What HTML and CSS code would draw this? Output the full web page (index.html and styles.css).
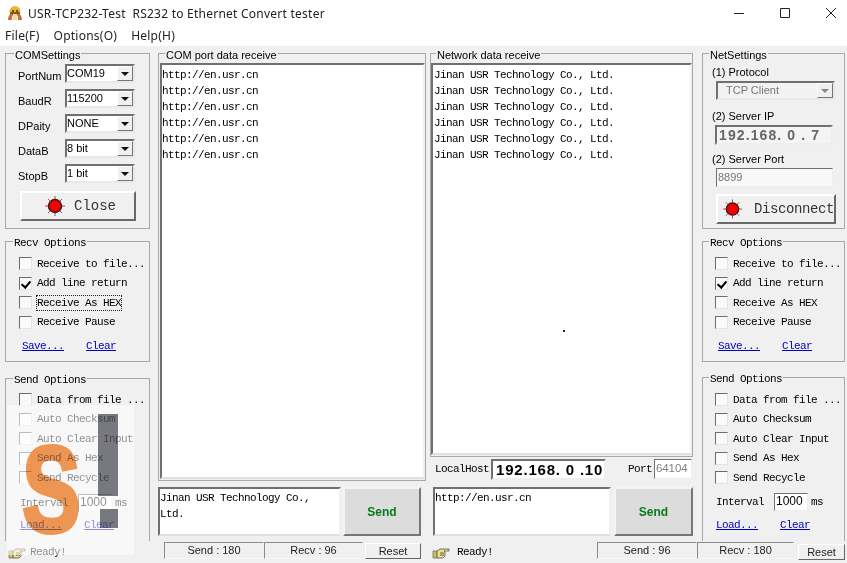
FILE: index.html
```html
<!DOCTYPE html>
<html lang="en">
<head>
<meta charset="utf-8">
<title>USR-TCP232-Test</title>
<link rel="stylesheet" href="styles.css">
</head>
<body>
<div class="window">
  <header class="titlebar">
    <svg class="appicon" width="16" height="16" viewBox="0 0 16 16"><circle cx="8" cy="6.5" r="5.5" fill="#f0b030"/><path d="M3 7h10v3H3z" fill="#8a5a20"/><path d="M1 15c0-4 2-6 4-6v6zM15 15c0-4-2-6-4-6v6z" fill="#c8703a"/><rect x="6" y="9" width="4" height="6" fill="#f6d9a0"/><circle cx="6" cy="6" r="1" fill="#3a2a10"/><circle cx="10" cy="6" r="1" fill="#3a2a10"/></svg>
    <span class="title">USR-TCP232-Test&nbsp; RS232 to Ethernet Convert tester</span>
    <div class="winctl">
      <svg width="12" height="12" viewBox="0 0 12 12"><path d="M1 6.5h10" stroke="#222" fill="none"/></svg>
      <svg width="12" height="12" viewBox="0 0 12 12"><path d="M1.5 1.5h9v9h-9z" stroke="#222" fill="none"/></svg>
      <svg width="12" height="12" viewBox="0 0 12 12"><path d="M1 1l10 10M11 1L1 11" stroke="#222" fill="none"/></svg>
    </div>
  </header>
  <nav class="menubar"><span>File(F)</span><span>Options(O)</span><span>Help(H)</span></nav>

  <main class="main">
    <section class="col">
      <fieldset class="group settings">
        <legend>COMSettings</legend>
        <div class="formrow"><label>PortNum</label><div class="combo"><span>COM19</span><i class="arrow"></i></div></div>
        <div class="formrow"><label>BaudR</label><div class="combo"><span>115200</span><i class="arrow"></i></div></div>
        <div class="formrow"><label>DPaity</label><div class="combo"><span>NONE</span><i class="arrow"></i></div></div>
        <div class="formrow"><label>DataB</label><div class="combo"><span>8 bit</span><i class="arrow"></i></div></div>
        <div class="formrow"><label>StopB</label><div class="combo"><span>1 bit</span><i class="arrow"></i></div></div>
        <button class="bigbtn closebtn"><svg class="led" width="22" height="22" viewBox="0 0 22 22"><use href="#ledicon"/></svg><span>Close</span></button>
      </fieldset>
      <fieldset class="group recv">
        <legend class="mono">Recv Options</legend>
        <div class="opts">
          <div class="opt"><i class="cb"></i>Receive to file...</div>
          <div class="opt"><i class="cb on"></i>Add line return</div>
          <div class="opt"><i class="cb"></i><span class="focus">Receive As HEX</span></div>
          <div class="opt"><i class="cb"></i>Receive Pause</div>
        </div>
        <div class="links"><a>Save...</a><a>Clear</a></div>
      </fieldset>
      <fieldset class="group send">
        <legend class="mono">Send Options</legend>
        <div class="opts">
          <div class="opt"><i class="cb"></i>Data from file ...</div>
          <div class="opt"><i class="cb"></i>Auto Checksum</div>
          <div class="opt"><i class="cb"></i>Auto Clear Input</div>
          <div class="opt"><i class="cb"></i>Send As Hex</div>
          <div class="opt"><i class="cb"></i>Send Recycle</div>
        </div>
        <div class="interval"><span>Interval</span><b class="field">1000</b><span>ms</span></div>
        <div class="links"><a>Load...</a><a>Clear</a></div>
      </fieldset>
    </section>

    <section class="col">
      <fieldset class="group pane compane">
        <legend>COM port data receive</legend>
        <div class="log">
          <div>http://en.usr.cn</div><div>http://en.usr.cn</div><div>http://en.usr.cn</div>
          <div>http://en.usr.cn</div><div>http://en.usr.cn</div><div>http://en.usr.cn</div>
        </div>
      </fieldset>
      <div class="sendrow comsend">
        <div class="sendbox">Jinan USR Technology Co., Ltd.</div>
        <button class="sendbtn">Send</button>
      </div>
    </section>

    <section class="col netcol">
      <fieldset class="group pane netpane">
        <legend>Network data receive</legend>
        <div class="log">
          <div>Jinan USR Technology Co., Ltd.</div><div>Jinan USR Technology Co., Ltd.</div><div>Jinan USR Technology Co., Ltd.</div>
          <div>Jinan USR Technology Co., Ltd.</div><div>Jinan USR Technology Co., Ltd.</div><div>Jinan USR Technology Co., Ltd.</div>
          <i class="speck"></i>
        </div>
      </fieldset>
      <div class="localrow">
        <span class="mono">LocalHost</span>
        <b class="field localip">192.168. 0 .10</b>
        <span class="mono portlabel">Port</span>
        <span class="field portval">64104</span>
      </div>
      <div class="sendrow netsend">
        <div class="sendbox">http://en.usr.cn</div>
        <button class="sendbtn">Send</button>
      </div>
    </section>

    <section class="col netside">
      <fieldset class="group settings net">
        <legend>NetSettings</legend>
        <div class="nlabel">(1) Protocol</div>
        <div class="combo wide disabled"><span>TCP Client</span><i class="arrow"></i></div>
        <div class="nlabel l2">(2) Server IP</div>
        <div class="field serverip">192.168. 0 . 7</div>
        <div class="nlabel l3">(2) Server Port</div>
        <div class="field serverport">8899</div>
        <button class="bigbtn discbtn"><svg class="led" width="22" height="22" viewBox="0 0 22 22"><use href="#ledicon"/></svg><span>Disconnect</span></button>
      </fieldset>
      <fieldset class="group recv">
        <legend class="mono">Recv Options</legend>
        <div class="opts">
          <div class="opt"><i class="cb"></i>Receive to file...</div>
          <div class="opt"><i class="cb on"></i>Add line return</div>
          <div class="opt"><i class="cb"></i>Receive As HEX</div>
          <div class="opt"><i class="cb"></i>Receive Pause</div>
        </div>
        <div class="links"><a>Save...</a><a>Clear</a></div>
      </fieldset>
      <fieldset class="group send sendnet">
        <legend class="mono">Send Options</legend>
        <div class="opts">
          <div class="opt"><i class="cb"></i>Data from file ...</div>
          <div class="opt"><i class="cb"></i>Auto Checksum</div>
          <div class="opt"><i class="cb"></i>Auto Clear Input</div>
          <div class="opt"><i class="cb"></i>Send As Hex</div>
          <div class="opt"><i class="cb"></i>Send Recycle</div>
        </div>
        <div class="interval"><span>Interval</span><b class="field">1000</b><span>ms</span></div>
        <div class="links"><a>Load...</a><a>Clear</a></div>
      </fieldset>
    </section>
  </main>

  <footer class="statusbar">
    <div class="ready r1"><svg width="18" height="13" viewBox="0 0 18 13"><use href="#handicon"/></svg><span>Ready!</span></div>
    <div class="stat s1">Send : 180</div>
    <div class="stat s2">Recv : 96</div>
    <button class="reset">Reset</button>
    <div class="ready r2"><svg width="18" height="13" viewBox="0 0 18 13"><use href="#handicon"/></svg><span>Ready!</span></div>
    <div class="stat s3">Send : 96</div>
    <div class="stat s4">Recv : 180</div>
    <button class="reset">Reset</button>
  </footer>
</div>

<div class="watermark">
  <span class="wm-s">S</span>
  <i class="wm-bar"></i>
  <i class="wm-dot"></i>
</div>

<svg class="defs" width="0" height="0">
  <defs>
    <g id="ledicon">
      <path d="M11 1v3M11 18v3M1 11h3M18 11h3M4 4l2 2M16 16l2 2M18 4l-2 2M6 16l-2 2" stroke="#e03030" stroke-width="1" fill="none"/>
      <circle cx="11" cy="11" r="6.5" fill="#f00000" stroke="#222" stroke-width="1.4"/>
      <circle cx="11" cy="11" r="4.6" fill="#f40000"/>
    </g>
    <g id="handicon">
      <path d="M1 5h4v7H1z" fill="#c8c070" stroke="#77744a" stroke-width=".8"/>
      <path d="M5 5l3-2h9v2h-5l1 1v4l-2 2H5z" fill="#e8dc90" stroke="#555" stroke-width=".8"/>
      <path d="M8 7h4M8 9h4" stroke="#444" stroke-width=".8"/>
    </g>
  </defs>
</svg>
</body>
</html>
```
FILE: styles.css
```css
* { box-sizing: border-box; }
html, body { margin: 0; padding: 0; }
body {
  width: 847px; height: 563px; overflow: hidden; position: relative;
  background: #f0f0f0; color: #000;
  font: 11px/14px "Liberation Sans", Arial, sans-serif;
}
.window { display: flex; flex-direction: column; height: 563px; }
.defs { position: absolute; }

/* Title and menu */
.titlebar {
  height: 26px; background: #fff; display: flex; align-items: center;
  padding-left: 7px; font: 12px "Noto Sans", sans-serif; color: #222;
}
.appicon { margin-right: 5px; }
.title { letter-spacing: .02em; flex: 1; }
.winctl { display: flex; gap: 34px; margin-right: 10px; }
.menubar {
  height: 20px; background: #fff; display: flex; gap: 14px; padding: 1px 0 0 5px;
  font: 12px/18px "Noto Sans", sans-serif; color: #222; letter-spacing: .02em;
}

/* Columns */
.main {
  flex: none; height: 495px; padding-left: 5px;
  display: grid; grid-template-columns: 145px 268px 263px 146px; column-gap: 6px;
}
.main .col { display: flex; flex-direction: column; min-height: 0; }
.main .col:nth-child(2) { margin-left: 2px; margin-right: -2px; }
.main .col:nth-child(4) { margin-left: 3px; }

/* Groups */
.group {
  margin: 0; min-width: 0; padding: 0 0 0 8px;
  border: 1px solid #a8a8a8;
}
.group legend { padding: 0 1px; font-size: 11px; line-height: 13px; transform: translateY(2px); }
.mono, .opt, .links, .interval, .log, .sendbox {
  font-family: "Liberation Mono", monospace; font-size: 11px; letter-spacing: -.6px;
}
.group legend.mono { font-size: 11px; letter-spacing: -.6px; margin-left: -6px; }
.settings { height: 182px; padding-left: 12px; flex: none; margin-top: 1px; }
.settings legend { margin-left: -4px; }
.recv { height: 127px; margin-top: 6px; flex: none; padding-left: 13px; }
.recv .opts { padding-top: 9px; }
.send { flex: 1; margin-top: 10px; padding-left: 13px; border-bottom: 0; }
.send .opts { padding-top: 8px; }
.sendnet { margin-top: 9px; }
.sendnet .opts { padding-top: 9px; }
.netside .recv, .netside .send { padding-left: 12px; }
.formrow { display: flex; align-items: center; height: 19px; margin-bottom: 6px; position: relative; top: 4px; }
.formrow label { width: 47px; padding-top: 5px; flex: none; }

/* Controls */
.combo {
  width: 70px; height: 19px; display: flex; justify-content: space-between; align-items: stretch;
  background: #fff; border: 2px solid; border-color: #707070 #e8e8e8 #e8e8e8 #707070;
  padding-left: 0; line-height: 14px; font-size: 11px;
}
.combo .arrow {
  width: 16px; background: #f0f0f0; position: relative;
  border: 1px solid; border-color: #fff #777 #777 #fff;
}
.arrow::after {
  content: ""; position: absolute; left: 3px; top: 5px;
  border: 4px solid transparent; border-top: 4px solid #111; border-bottom: 0;
}
.combo.wide { width: 119px; margin: 2px 0 0 4px; }
.disabled { background: #f2f2f2; color: #777; }
.disabled span { padding-left: 8px; }
.disabled .arrow::after { border-top-color: #888; }

.bigbtn {
  display: flex; align-items: center; padding: 0; height: 30px; background: #f0f0f0;
  border: 2px solid; border-color: #fff #696969 #696969 #fff;
  font: 14px "Liberation Mono", monospace; color: #333;
}
.closebtn { width: 116px; margin: 12px 0 0 2px; padding-left: 22px; gap: 8px; }
.discbtn { width: 120px; margin: 7px 0 0 4px; padding-left: 4px; gap: 11px; letter-spacing: -.4px; }

.field {
  display: block; background: #fff; font-weight: normal;
  border: 2px solid; border-color: #707070 #eee #eee #707070;
}
.net { padding: 5px 0 0 9px; }
.net legend { margin-left: -3px; }
.nlabel { line-height: 14px; }
.l2 { margin-top: 9px; }
.l3 { margin-top: 7px; }
.serverip {
  width: 118px; height: 20px; margin: 2px 0 0 3px; padding-left: 2px; color: #666; background: #f4f4f4;
  font: bold 14px/16px "Liberation Sans", sans-serif; letter-spacing: 1.1px; white-space: pre;
}
.serverport {
  width: 117px; height: 19px; margin: 2px 0 0 4px; padding-left: 1px; color: #777; background: #f8f8f8;
  border-width: 1px; line-height: 16px; font-size: 11px;
}

/* Checkbox rows */
.opts { display: flex; flex-direction: column; gap: 6px; }
.opt { display: flex; align-items: center; height: 13.5px; white-space: pre; }
.cb {
  width: 13px; height: 13px; margin-right: 5px; flex: none; background: #fafafa; position: relative;
  border: 1px solid; border-color: #6c6c6c #e4e4e4 #e4e4e4 #6c6c6c;
}
.cb.on::after {
  content: ""; position: absolute; left: 3px; top: 1px; width: 4px; height: 7px;
  border: solid #000; border-width: 0 2px 2px 0; transform: rotate(40deg);
}
.focus { outline: 1px dotted #222; outline-offset: 0; }
.links { display: flex; gap: 22px; padding: 10px 0 0 3px; }
.links a { color: #0000c0; text-decoration: underline; }
.send .links { padding-top: 6px; padding-left: 1px; }
.sendnet .links { padding-top: 7px; }
.interval { display: flex; align-items: center; gap: 3px; margin-top: 9px; height: 18px; white-space: pre; padding-left: 1px; }
.sendnet .interval { margin-top: 8px; }
.interval .field {
  width: 34px; height: 18px; padding-left: 1px; margin-left: 7px;
  font: 12px/14px "Liberation Sans", sans-serif; letter-spacing: 0; border-width: 1px;
}

/* Receive panes */
.pane { padding: 0; position: relative; }
.pane legend { margin-left: 5px; }
.compane { height: 434px; flex: none; margin-top: 1px; padding: 3px 0 0 1px; width: 268px; }
.netpane { height: 410px; flex: none; margin-top: 1px; padding: 3px 0 0 0; }
.log {
  background: #fff; padding: 2px 0 0 0; line-height: 16px; position: relative;
  border: 2px solid; border-color: #707070 #f0f0f0 #e0e0e0 #707070;
}
.log div { white-space: pre; }
.compane .log { height: 416px; }
.netpane .log { height: 392px; padding-left: 1px; }
.speck { position: absolute; left: 130px; top: 265px; width: 2px; height: 2px; background: #222; }

/* Send rows */
.sendrow { display: flex; height: 49px; flex: none; }
.comsend { margin-top: 6px; width: 263px; gap: 2px; }
.netsend { margin-top: 5px; gap: 3px; margin-left: 3px; }
.netsend .sendbtn { width: 79px; }
.sendbox {
  background: #fff; border: 2px solid; border-color: #707070 #f0f0f0 #e0e0e0 #707070;
  padding: 1px 12px 0 0; line-height: 16px; flex: 1;
}
.sendbtn {
  width: 78px; flex: none; padding: 0; background: #dcdcdc;
  border: 2px solid; border-color: #f4f4f4 #777 #777 #f4f4f4;
  color: #0b7a16; font: bold 12px "Liberation Sans", sans-serif;
}

/* Local host */
.localrow { display: flex; align-items: center; height: 24px; margin-top: 1px; padding: 0 0 2px 5px; }
.localip {
  width: 115px; height: 21px; margin-left: 2px; padding-left: 3px; background: #fff;
  font: bold 15px/17px "Liberation Sans", sans-serif; letter-spacing: .8px; white-space: pre;
}
.portlabel { margin-left: 22px; }
.portval {
  width: 38px; height: 20px; margin-left: 2px; color: #808080; font-size: 11.5px; line-height: 16px;
  padding-left: 1px; border-width: 1px; letter-spacing: -.1px;
}

/* Status bar */
.statusbar { flex: 1; display: flex; align-items: flex-start; padding: 1px 0 0 8px; position: relative; }
.ready { display: flex; align-items: center; font: 11px/15px "Liberation Mono", monospace; letter-spacing: -.6px; margin-top: 3px; }
.ready svg { margin-right: 7px; }
.ready.r1 { width: 156px; }
.ready.r1 svg { margin-right: 4px; }
.ready.r2 { width: 165px; margin-left: 11px; }
.stat {
  width: 100px; height: 17px; text-align: center; line-height: 14px; background: #f0f0f0; color: #222;
  border: 1px solid; border-color: #8c8c8c #f0f0f0 #f8f8f8 #8c8c8c;
}
.reset {
  width: 56px; height: 16px; padding: 0; margin: 1px 0 0 2px; background: #f0f0f0; color: #222;
  border: 1px solid; border-color: #fff #666 #666 #fff; font: 11px/13px "Liberation Sans", sans-serif;
}
.s2 { width: 99px; }
.s4 { width: 97px; }
.s4 + .reset { width: 47px; margin: 2px 0 0 4px; }

/* Watermark lying over the left column */
.watermark {
  position: absolute; left: 7px; top: 405px; width: 127px; height: 150px;
  background: rgba(255,255,255,.55); pointer-events: none;
}
.wm-s {
  position: absolute; left: 15px; top: 24px; transform: scaleX(.72); transform-origin: left top;
  font: bold 122px/122px "Liberation Sans", sans-serif; color: #f49a55; mix-blend-mode: multiply;
  -webkit-text-stroke: 4px #f49a55;
}
.wm-bar { position: absolute; left: 91px; top: 9px; width: 20px; height: 82px; background: #7b7b84; mix-blend-mode: multiply; }
.wm-dot { position: absolute; left: 93px; top: 104px; width: 18px; height: 19px; background: #7b7b84; mix-blend-mode: multiply; }
```
